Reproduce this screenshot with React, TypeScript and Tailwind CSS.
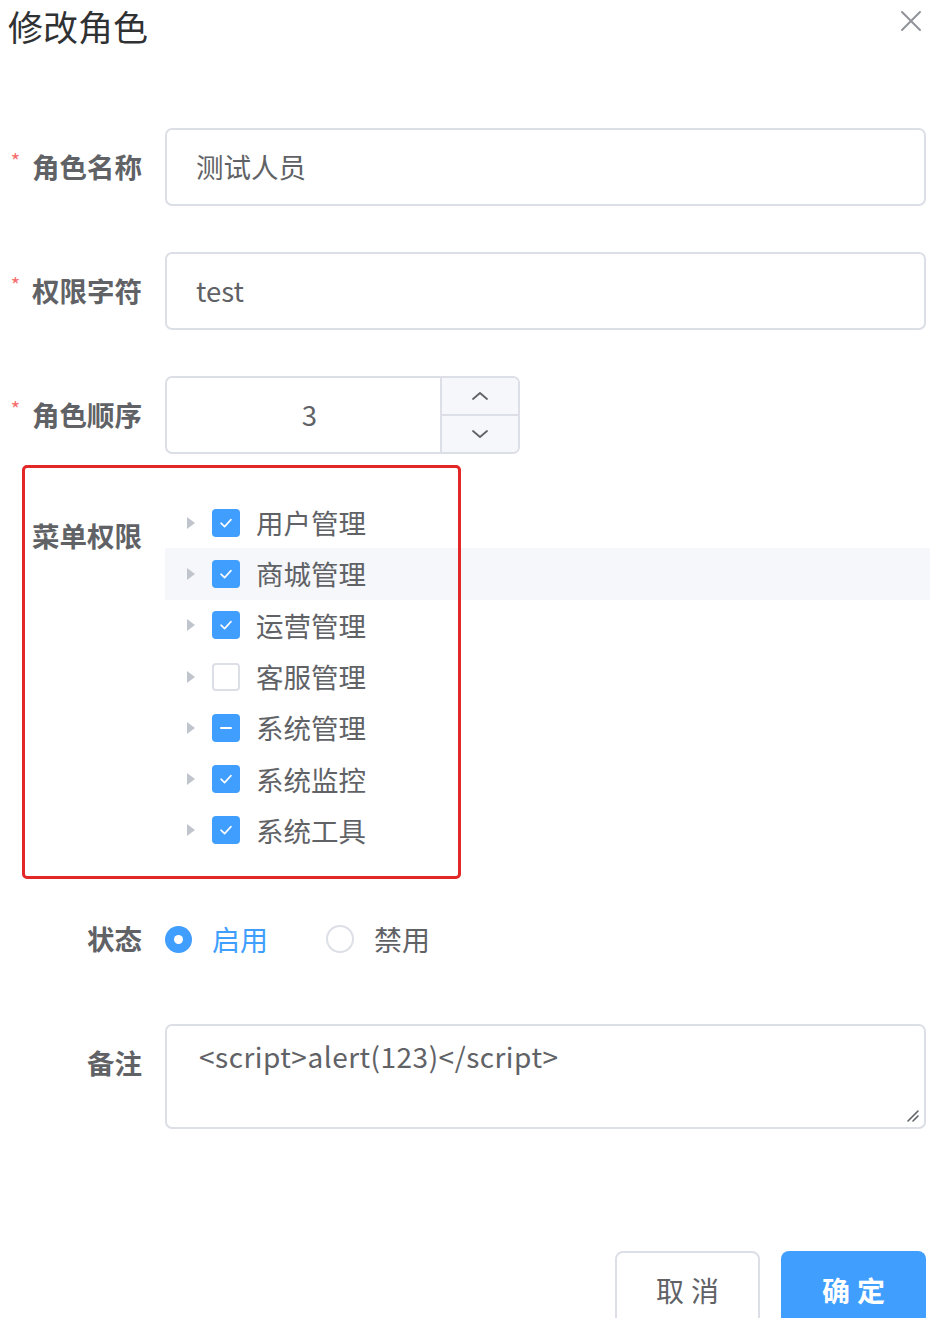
import React from "react";

const font = { fontFamily: '"Noto Sans CJK SC", "Noto Sans", sans-serif' };

type CheckState = "checked" | "indeterminate" | "unchecked";

const menus: { name: string; state: CheckState; hover?: boolean }[] = [
  { name: "用户管理", state: "checked" },
  { name: "商城管理", state: "checked", hover: true },
  { name: "运营管理", state: "checked" },
  { name: "客服管理", state: "unchecked" },
  { name: "系统管理", state: "indeterminate" },
  { name: "系统监控", state: "checked" },
  { name: "系统工具", state: "checked" },
];

function Label({ text, required }: { text: string; required?: boolean }) {
  return (
    <div className="w-[142px] shrink-0 h-[78px] flex items-center justify-end text-[27.5px] font-bold text-[#606266]">
      {required && <span className="text-[#f56c6c] text-[20px] mr-[12px] -mt-[12px] font-normal">*</span>}
      {text}
    </div>
  );
}

function Checkbox({ state }: { state: CheckState }) {
  if (state === "unchecked") {
    return <span className="w-[28px] h-[28px] rounded-[4px] border-2 border-[#dcdfe6] bg-white shrink-0" />;
  }
  return (
    <span className="w-[28px] h-[28px] rounded-[4px] bg-[#409eff] flex items-center justify-center shrink-0">
      {state === "checked" ? (
        <svg width="18" height="18" viewBox="0 0 18 18" fill="none">
          <path d="M4 9.2 L7.6 12.6 L14 5.6" stroke="white" strokeWidth="1.6" strokeLinecap="round" strokeLinejoin="round" />
        </svg>
      ) : (
        <span className="w-[12px] h-[2px] bg-white rounded" />
      )}
    </span>
  );
}

export default function App() {
  return (
    <div className="w-[948px] h-[1318px] bg-white overflow-hidden relative" style={font}>
      {/* Header */}
      <div className="flex items-start justify-between pl-[8px] pr-[26px] h-[128px]">
        <h2 className="text-[35px] leading-[51px] text-[#303133] font-normal">修改角色</h2>
        <svg className="mt-[10px]" width="22" height="22" viewBox="0 0 22 22" fill="none">
          <path d="M2 2 L20 20 M20 2 L2 20" stroke="#909399" strokeWidth="2" strokeLinecap="round" />
        </svg>
      </div>

      {/* Form */}
      <div className="flex flex-col">
        <div className="flex gap-[23px] pr-[22px]">
          <Label text="角色名称" required />
          <div className="flex-1 h-[78px] border-2 border-[#dcdfe6] rounded-[7px] flex items-center px-[29px] text-[27.5px] text-[#606266]">
            测试人员
          </div>
        </div>

        <div className="flex gap-[23px] pr-[22px] mt-[46px]">
          <Label text="权限字符" required />
          <div className="flex-1 h-[78px] border-2 border-[#dcdfe6] rounded-[7px] flex items-center px-[29px] text-[27.5px] text-[#606266]">
            test
          </div>
        </div>

        <div className="flex gap-[23px] mt-[46px]">
          <Label text="角色顺序" required />
          <div className="w-[355px] h-[78px] border-2 border-[#dcdfe6] rounded-[7px] flex overflow-hidden">
            <div className="flex-1 flex items-center justify-center pl-[12px] text-[27.5px] text-[#606266]">3</div>
            <div className="w-[78px] border-l-2 border-[#dcdfe6] bg-[#f5f7fa] flex flex-col">
              <div className="flex-1 flex items-center justify-center border-b-2 border-[#dcdfe6]">
                <svg width="18" height="12" viewBox="0 0 18 12" fill="none">
                  <path d="M2 9 L9 3 L16 9" stroke="#606266" strokeWidth="1.8" strokeLinecap="round" strokeLinejoin="round" />
                </svg>
              </div>
              <div className="flex-1 flex items-center justify-center">
                <svg width="18" height="12" viewBox="0 0 18 12" fill="none">
                  <path d="M2 3 L9 9 L16 3" stroke="#606266" strokeWidth="1.8" strokeLinecap="round" strokeLinejoin="round" />
                </svg>
              </div>
            </div>
          </div>
        </div>

        {/* Menu permissions with highlight annotation */}
        <div className="flex gap-[23px] relative mt-[43px]">
          <Label text="菜单权限" />
          <div className="flex-1 flex flex-col pr-[18px]">
            {menus.map((m) => (
              <div
                key={m.name}
                className={`h-[51.3px] flex items-center pl-[21px] ${m.hover ? "bg-[#f5f7fa]" : ""}`}
              >
                <svg width="10" height="14" viewBox="0 0 10 14" className="mr-[16px]">
                  <path d="M1 1 L9 7 L1 13 Z" fill="#c0c4cc" />
                </svg>
                <Checkbox state={m.state} />
                <span className="ml-[16px] text-[27.5px] text-[#606266]">{m.name}</span>
              </div>
            ))}
          </div>
          <div className="absolute left-[22px] top-[-32px] w-[439px] h-[414px] border-[3px] border-[#e32626] rounded-[5px] pointer-events-none" />
        </div>

        <div className="flex gap-[23px] mt-[44px]">
          <Label text="状态" />
          <div className="flex items-center h-[78px] text-[28px]">
            <span className="w-[27px] h-[27px] rounded-full bg-[#409eff] flex items-center justify-center">
              <span className="w-[9px] h-[9px] rounded-full bg-white" />
            </span>
            <span className="ml-[20px] text-[#409eff]">启用</span>
            <span className="ml-[58px] w-[28px] h-[28px] rounded-full border-2 border-[#dcdfe6] bg-white" />
            <span className="ml-[20px] text-[#606266]">禁用</span>
          </div>
        </div>

        <div className="flex gap-[23px] pr-[22px] mt-[46px]">
          <Label text="备注" />
          <div className="flex-1 h-[105px] border-2 border-[#dcdfe6] rounded-[7px] px-[32px] pt-[11px] text-[28px] leading-[38px] tracking-[0.5px] text-[#606266] relative">
            {"<script>alert(123)</script>"}
            <svg className="absolute right-[4px] bottom-[4px]" width="16" height="16" viewBox="0 0 16 16" fill="none">
              <path d="M14 4 L4 14 M14 9 L9 14" stroke="#606266" strokeWidth="1.6" strokeLinecap="round" />
            </svg>
          </div>
        </div>
      </div>

      {/* Footer */}
      <div className="flex justify-end gap-[21px] pr-[22px] mt-[122px]">
        <button className="w-[145px] h-[78px] border-2 border-[#dcdfe6] rounded-[8px] bg-white text-[28px] text-[#606266] tracking-[7px] pl-[7px]">
          取消
        </button>
        <button className="w-[145px] h-[78px] rounded-[8px] bg-[#409eff] text-[28px] text-white font-bold tracking-[7px] pl-[7px]">
          确定
        </button>
      </div>
    </div>
  );
}
